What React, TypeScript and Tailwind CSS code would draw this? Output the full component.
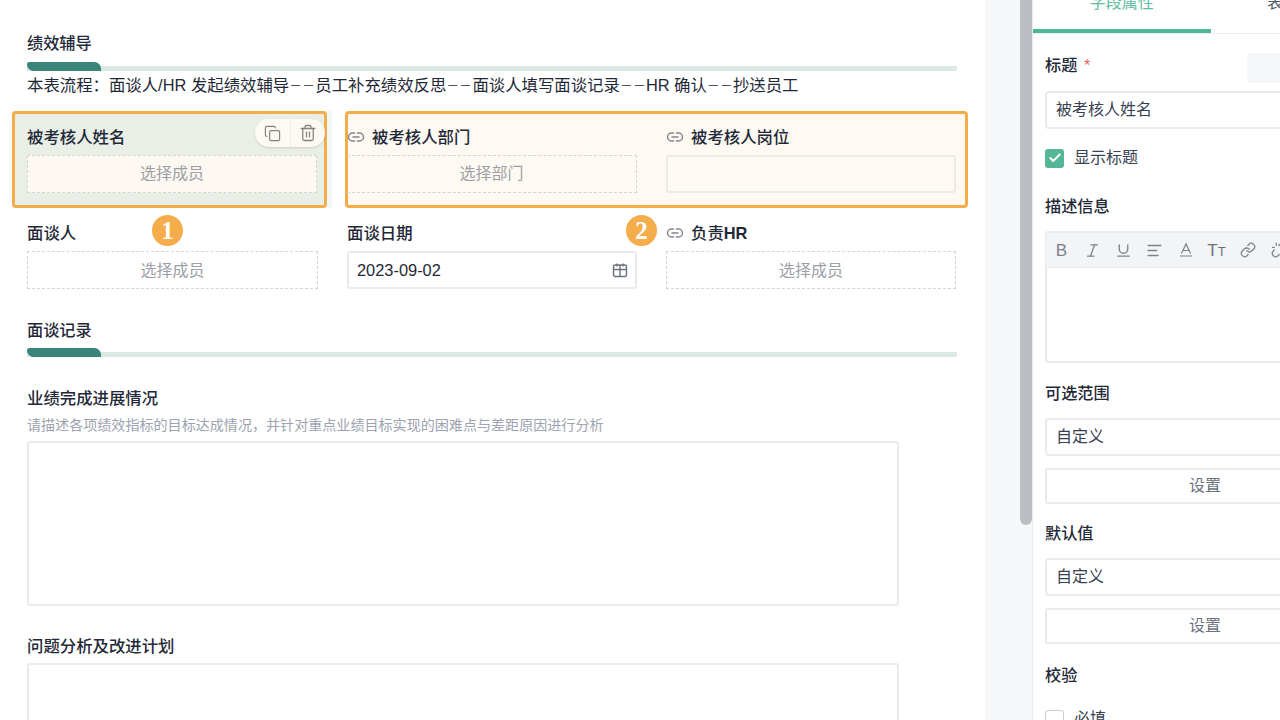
import React from "react";
import { Copy, Trash2, Italic, Underline, AlignLeft, Link, Unlink, Check } from "lucide-react";

const LinkIco = () => (
  <svg width="18" height="18" viewBox="0 0 18 18" fill="none" stroke="#83878e" strokeWidth="1.5" strokeLinecap="round" className="shrink-0">
    <path d="M7.5 5H5.5a4 4 0 0 0 0 8h2" />
    <path d="M10.5 5h2a4 4 0 0 1 0 8h-2" />
    <path d="M6 9h6" />
  </svg>
);

const Label = ({ children, link }: { children: React.ReactNode; link?: boolean }) => (
  <div className="flex items-center gap-[7px] h-6 mb-[6px] text-[16.4px] leading-6 font-medium text-[#1f2937]">
    {link && <LinkIco />}
    <span>{children}</span>
  </div>
);

const Dashed = ({ children, extra }: { children: React.ReactNode; extra?: string }) => (
  <div className={`h-[38px] flex items-center justify-center border border-dashed border-[#d4d4d4] text-base text-[#9ca0a6] ${extra ?? ""}`}>
    {children}
  </div>
);

const SectionBar = () => (
  <div className="relative h-[9px] w-[930px] flex items-end">
    <div className="h-[5px] w-full bg-[#dbe9e5]" />
    <div className="absolute left-0 top-0 h-[9px] w-[74px] bg-[#3a857a] rounded-tl-[3px] rounded-tr-[8px] rounded-bl-[8px]" />
  </div>
);

const Badge = ({ n, pos }: { n: string; pos: string }) => (
  <div className={`absolute ${pos} w-[31px] h-[31px] rounded-full bg-[#f5ad4c] flex items-center justify-center text-white text-[25px] font-bold font-['Liberation_Serif',serif]`}>
    {n}
  </div>
);

const PanelLabel = ({ children }: { children: React.ReactNode }) => (
  <div className="h-6 text-[16.2px] leading-6 font-medium text-[#1f2937]">{children}</div>
);

const Field = ({ children }: { children: React.ReactNode }) => (
  <div className="w-[320px] h-[38px] flex items-center px-[9px] border-2 border-[#e9eaec] rounded-[4px] text-base text-[#374151] bg-white">
    {children}
  </div>
);

const Btn = () => (
  <div className="w-[320px] h-[36px] flex items-center justify-center border-2 border-[#e9eaec] rounded-[3px] text-base text-[#6b7280] bg-white">
    设置
  </div>
);

const Tool = ({ children }: { children: React.ReactNode }) => (
  <div className="w-[31px] h-full flex items-center justify-center shrink-0 text-[#7d828b]">{children}</div>
);

const Dd = () => <span className="relative -top-[1px] text-[12.6px] tracking-[0.4px]">{"\uFF0D\uFF0D"}</span>;

export default function App() {
  return (
    <div className="relative w-[1280px] h-[720px] overflow-hidden flex bg-white font-['Liberation_Sans','Noto_Sans_CJK_SC',sans-serif]">
      {/* Canvas */}
      <div className="relative w-[985px] h-[720px] shrink-0 pl-[27px] pt-[31px] overflow-hidden">
        <div className="h-6 text-[16.2px] leading-6 font-medium text-[#1f2937] mb-[7px]">绩效辅导</div>
        <SectionBar />
        <div className="mt-[2px] h-6 text-[16.4px] leading-6 text-[#1f2937] whitespace-nowrap">
          {"本表流程\uFF1A面谈人/HR 发起绩效辅导"}<Dd />员工补充绩效反思<Dd />面谈人填写面谈记录<Dd />HR 确认<Dd />抄送员工
        </div>

        <div className="mt-[14px] -ml-[15px] flex h-[97px]">
          <div className="w-[320px] bg-[#eef8f6] shrink-0">
            <div className="relative w-[315px] h-[97px] border-[3px] border-[#f5ad4c] rounded-[4px] bg-[#e9efe7] pl-[12px] pr-[7px] pt-[11px]">
              <Label>被考核人姓名</Label>
              <Dashed extra="bg-[#fdf8f1]">选择成员</Dashed>
              <div className="absolute left-[240px] top-[5px] w-[70px] h-[28px] rounded-full bg-[#fdf9f3] shadow-sm flex items-center text-[#85857f]">
                <div className="w-[36px] h-full flex items-center justify-center border-r border-[#eeebe4]">
                  <Copy size={17} strokeWidth={1.7} />
                </div>
                <div className="flex-1 flex items-center justify-center">
                  <Trash2 size={18} strokeWidth={1.7} />
                </div>
              </div>
            </div>
          </div>
          <div className="ml-[13px] w-[623px] h-[97px] border-[3px] border-[#f5ad4c] rounded-[4px] bg-[#fef9f2] pt-[11px] flex gap-[29px]">
            <div className="w-[290px] -ml-[1px]">
              <Label link>被考核人部门</Label>
              <Dashed extra="border-l-0">选择部门</Dashed>
            </div>
            <div className="w-[290px]">
              <Label link>被考核人岗位</Label>
              <div className="h-[38px] border-2 border-[#ecebe6] rounded-[3px]" />
            </div>
          </div>
        </div>

        <div className="mt-[13px] flex gap-[29px] w-[930px]">
          <div className="w-[291px]">
            <Label>面谈人</Label>
            <Dashed extra="pt-[1px]">选择成员</Dashed>
          </div>
          <div className="w-[290px]">
            <Label>面谈日期</Label>
            <div className="h-[38px] border-2 border-[#e9eaec] rounded-[3px] flex items-center justify-between pl-[8px] pr-[7px] text-[16.4px] text-[#1f2937]">
              <span>2023-09-02</span>
              <svg width="16" height="16" viewBox="0 0 16 16" fill="none" stroke="#6b7280" strokeWidth="1.4" strokeLinejoin="round">
                <rect x="1.5" y="3" width="13" height="11.500" rx="1.500" />
                <path d="M1.500 7.500h13M8 3v11.500M5 1.500v3M11 1.500v3" />
              </svg>
            </div>
          </div>
          <div className="w-[290px]">
            <Label link>负责<span className="font-bold">HR</span></Label>
            <Dashed extra="pt-[1px]">选择成员</Dashed>
          </div>
        </div>

        <div className="mt-[29px] h-6 text-[16.2px] leading-6 font-medium text-[#1f2937] mb-[6px]">面谈记录</div>
        <SectionBar />

        <div className="mt-[29px] h-6 text-[16.4px] leading-6 font-medium text-[#1f2937]">业绩完成进展情况</div>
        <div className="mt-[5px] h-5 text-[14.07px] leading-5 text-[#9ca3af] whitespace-nowrap">
          {"请描述各项绩效指标的目标达成情况\uFF0C并针对重点业绩目标实现的困难点与差距原因进行分析"}
        </div>
        <div className="mt-[6px] w-[872px] h-[165px] border-2 border-[#e9eaec] rounded-[3px]" />

        <div className="mt-[28px] h-6 text-[16.4px] leading-6 font-medium text-[#1f2937]">问题分析及改进计划</div>
        <div className="mt-[5px] w-[872px] h-[164px] border-2 border-[#e9eaec] rounded-[3px]" />

        <Badge n="1" pos="left-[152px] top-[215px]" />
        <Badge n="2" pos="left-[626px] top-[215px]" />
      </div>

      {/* Scroll gutter */}
      <div className="w-[47px] h-[720px] shrink-0 bg-[#f5f7f9] flex justify-end">
        <div className="w-[12px] h-[525px] bg-[#babdc1] rounded-b-[6px]" />
      </div>

      {/* Properties panel */}
      <div className="w-[356px] shrink-0 h-[720px] bg-white border-l border-[#e8eaec] overflow-hidden">
        <div className="flex h-[34px] border-b border-[#eceef0]">
          <div className="w-[178px] h-[33px] border-b-4 border-[#4db694] flex items-end justify-center pb-[14px] text-base leading-6 text-[#62bc9f] whitespace-nowrap overflow-hidden">
            字段属性
          </div>
          <div className="w-[178px] h-[33px] flex items-end justify-center pb-[18px] text-base leading-6 text-[#4b5563] whitespace-nowrap">
            表单属性
          </div>
        </div>
        <div className="pl-[12px]">
          <div className="mt-[19px] flex items-start justify-between h-[30px] w-[320px]">
            <div className="text-[16.2px] leading-6 font-medium text-[#1f2937]">
              标题 <span className="text-[#e5675f] ml-[2px]">*</span>
            </div>
            <div className="w-[118px] h-[30px] rounded-[3px] bg-[#f5f6f8]" />
          </div>
          <div className="mt-[8px]">
            <Field>被考核人姓名</Field>
          </div>
          <div className="mt-[19px] flex items-center gap-[10px] h-[20px] text-base text-[#374151]">
            <div className="w-[19px] h-[19px] rounded-[3px] bg-[#54b597] flex items-center justify-center">
              <Check size={14} strokeWidth={3.5} className="text-white" />
            </div>
            显示标题
          </div>
          <div className="mt-[26px]">
            <PanelLabel>描述信息</PanelLabel>
          </div>
          <div className="mt-[13px] w-[320px] h-[132px] border-2 border-[#e9eaec] rounded-[3px]">
            <div className="h-[35px] bg-[#f3f4f6] border-b border-[#e9eaec] flex items-center overflow-hidden -ml-[1px]">
              <Tool><span className="text-[17px] leading-none">B</span></Tool>
              <Tool><Italic size={17} strokeWidth={1.8} /></Tool>
              <Tool><Underline size={17} strokeWidth={1.9} /></Tool>
              <Tool><AlignLeft size={17} strokeWidth={1.9} /></Tool>
              <Tool>
                <svg width="16" height="16" viewBox="0 0 16 16" fill="none" stroke="currentColor" strokeWidth="1.2">
                  <path d="M3.500 11.500 8 2l4.500 9.500M5 8.500h6M2 14h12" />
                </svg>
              </Tool>
              <Tool>
                <span className="text-[17px] leading-none text-[#6b7078]">T<span className="text-[13px]">T</span></span>
              </Tool>
              <Tool><Link size={16} strokeWidth={1.9} /></Tool>
              <Tool><Unlink size={16} strokeWidth={1.9} /></Tool>
            </div>
          </div>
          <div className="mt-[18px]">
            <PanelLabel>可选范围</PanelLabel>
          </div>
          <div className="mt-[13px]">
            <Field>自定义</Field>
          </div>
          <div className="mt-[12px]">
            <Btn />
          </div>
          <div className="mt-[17px]">
            <PanelLabel>默认值</PanelLabel>
          </div>
          <div className="mt-[13px]">
            <Field>自定义</Field>
          </div>
          <div className="mt-[12px]">
            <Btn />
          </div>
          <div className="mt-[19px]">
            <PanelLabel>校验</PanelLabel>
          </div>
          <div className="mt-[20px] flex items-center gap-[10px] text-base text-[#374151]">
            <div className="w-[19px] h-[19px] rounded-[3px] border border-[#c9ccd1] bg-white" />
            必填
          </div>
        </div>
      </div>
    </div>
  );
}
